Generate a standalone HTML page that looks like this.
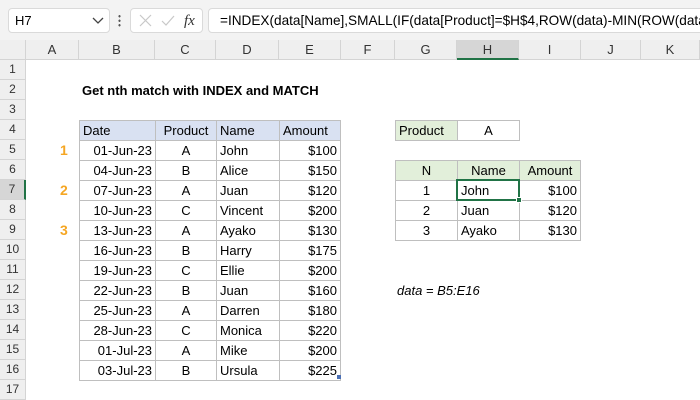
<!DOCTYPE html>
<html><head><style>
*{box-sizing:border-box;margin:0;padding:0}
body{width:700px;height:400px;overflow:hidden;background:#fff;font-family:"Liberation Sans",Calibri,sans-serif;font-size:13px;color:#000;position:relative}
.a{position:absolute}
.top{left:0;top:0;width:700px;height:40px;background:#f3f3f3}
.box{background:#fff;border:1px solid #dadada;border-radius:4px}
.ch{top:40px;height:20px;background:#efefef;border-right:1px solid #d4d4d4;border-bottom:1px solid #d4d4d4;text-align:center;line-height:19px;color:#333;font-size:13px}
.rh{left:0;width:26px;height:20px;background:#efefef;border-bottom:1px solid #d4d4d4;border-right:1px solid #d4d4d4;text-align:center;line-height:19px;color:#333;font-size:12px}
.c{height:21px;border:1px solid #bfbfbf;line-height:19px;padding:0 3px;white-space:nowrap;overflow:hidden}
.r{text-align:right}.m{text-align:center}
.hb{background:#d9e1f2}.hg{background:#e2efda}
.n{color:#f5a623;font-weight:bold;font-size:14px;left:60px}
</style></head><body>
<div class="a top"></div>
<div class="a box" style="left:8px;top:8px;width:102px;height:25px"></div>
<div class="a" style="left:15px;top:13px;font-size:13px">H7</div>
<svg class="a" style="left:92px;top:17px" width="12" height="8"><path d="M1 1l5 5 5-5" stroke="#444" fill="none" stroke-width="1.3"/></svg>
<div class="a" style="left:118px;top:14px;width:3px;height:13px;background:radial-gradient(circle,#555 1px,transparent 1.3px) 0 0/3px 4.5px"></div>
<div class="a box" style="left:130px;top:8px;width:73px;height:25px"></div>
<svg class="a" style="left:138px;top:13px" width="60" height="16"><path d="M2 2l11 11M13 2L2 13" stroke="#c8c8c8" stroke-width="1.2"/><path d="M24 8l4 4 8-9" stroke="#c8c8c8" fill="none" stroke-width="1.2"/><text x="46" y="12" font-family="Liberation Serif" font-style="italic" font-size="15" fill="#333">fx</text></svg>
<div class="a box" style="left:208px;top:8px;width:500px;height:25px;border-radius:4px 0 0 4px"></div>
<div class="a" style="left:220px;top:13px;font-size:13.6px;white-space:nowrap">=INDEX(data[Name],SMALL(IF(data[Product]=$H$4,ROW(data)-MIN(ROW(data</div>

<div class="a ch" style="left:0;width:26px;background:#efefef"></div>
<div class="a ch" style="left:26px;width:53px">A</div>
<div class="a ch" style="left:79px;width:76px">B</div>
<div class="a ch" style="left:155px;width:61px">C</div>
<div class="a ch" style="left:216px;width:63px">D</div>
<div class="a ch" style="left:279px;width:62px">E</div>
<div class="a ch" style="left:341px;width:54px">F</div>
<div class="a ch" style="left:395px;width:62px">G</div>
<div class="a ch" style="left:457px;width:62px;background:#d6d6d6;border-bottom:2px solid #217346">H</div>
<div class="a ch" style="left:519px;width:62px">I</div>
<div class="a ch" style="left:581px;width:60px">J</div>
<div class="a ch" style="left:641px;width:59px">K</div>

<div class="a rh" style="top:60px">1</div><div class="a rh" style="top:80px">2</div><div class="a rh" style="top:100px">3</div><div class="a rh" style="top:120px">4</div><div class="a rh" style="top:140px">5</div><div class="a rh" style="top:160px">6</div><div class="a rh" style="top:180px;background:#d6d6d6;border-right:2px solid #217346">7</div><div class="a rh" style="top:200px">8</div><div class="a rh" style="top:220px">9</div><div class="a rh" style="top:240px">10</div><div class="a rh" style="top:260px">11</div><div class="a rh" style="top:280px">12</div><div class="a rh" style="top:300px">13</div><div class="a rh" style="top:320px">14</div><div class="a rh" style="top:340px">15</div><div class="a rh" style="top:360px">16</div><div class="a rh" style="top:380px">17</div>

<div class="a" style="left:82px;top:83px;font-weight:bold;font-size:13px">Get nth match with INDEX and MATCH</div>
<div class="a n" style="top:142px">1</div><div class="a n" style="top:182px">2</div><div class="a n" style="top:222px">3</div>

<div class="a c hb" style="left:79px;top:120px;width:77px">Date</div>
<div class="a c hb m" style="left:155px;top:120px;width:62px">Product</div>
<div class="a c hb" style="left:216px;top:120px;width:64px">Name</div>
<div class="a c hb" style="left:279px;top:120px;width:62px">Amount</div>

<div class="a c r" style="left:79px;top:140px;width:77px">01-Jun-23</div><div class="a c m" style="left:155px;top:140px;width:62px">A</div><div class="a c" style="left:216px;top:140px;width:64px">John</div><div class="a c r" style="left:279px;top:140px;width:62px">$100</div>
<div class="a c r" style="left:79px;top:160px;width:77px">04-Jun-23</div><div class="a c m" style="left:155px;top:160px;width:62px">B</div><div class="a c" style="left:216px;top:160px;width:64px">Alice</div><div class="a c r" style="left:279px;top:160px;width:62px">$150</div>
<div class="a c r" style="left:79px;top:180px;width:77px">07-Jun-23</div><div class="a c m" style="left:155px;top:180px;width:62px">A</div><div class="a c" style="left:216px;top:180px;width:64px">Juan</div><div class="a c r" style="left:279px;top:180px;width:62px">$120</div>
<div class="a c r" style="left:79px;top:200px;width:77px">10-Jun-23</div><div class="a c m" style="left:155px;top:200px;width:62px">C</div><div class="a c" style="left:216px;top:200px;width:64px">Vincent</div><div class="a c r" style="left:279px;top:200px;width:62px">$200</div>
<div class="a c r" style="left:79px;top:220px;width:77px">13-Jun-23</div><div class="a c m" style="left:155px;top:220px;width:62px">A</div><div class="a c" style="left:216px;top:220px;width:64px">Ayako</div><div class="a c r" style="left:279px;top:220px;width:62px">$130</div>
<div class="a c r" style="left:79px;top:240px;width:77px">16-Jun-23</div><div class="a c m" style="left:155px;top:240px;width:62px">B</div><div class="a c" style="left:216px;top:240px;width:64px">Harry</div><div class="a c r" style="left:279px;top:240px;width:62px">$175</div>
<div class="a c r" style="left:79px;top:260px;width:77px">19-Jun-23</div><div class="a c m" style="left:155px;top:260px;width:62px">C</div><div class="a c" style="left:216px;top:260px;width:64px">Ellie</div><div class="a c r" style="left:279px;top:260px;width:62px">$200</div>
<div class="a c r" style="left:79px;top:280px;width:77px">22-Jun-23</div><div class="a c m" style="left:155px;top:280px;width:62px">B</div><div class="a c" style="left:216px;top:280px;width:64px">Juan</div><div class="a c r" style="left:279px;top:280px;width:62px">$160</div>
<div class="a c r" style="left:79px;top:300px;width:77px">25-Jun-23</div><div class="a c m" style="left:155px;top:300px;width:62px">A</div><div class="a c" style="left:216px;top:300px;width:64px">Darren</div><div class="a c r" style="left:279px;top:300px;width:62px">$180</div>
<div class="a c r" style="left:79px;top:320px;width:77px">28-Jun-23</div><div class="a c m" style="left:155px;top:320px;width:62px">C</div><div class="a c" style="left:216px;top:320px;width:64px">Monica</div><div class="a c r" style="left:279px;top:320px;width:62px">$220</div>
<div class="a c r" style="left:79px;top:340px;width:77px">01-Jul-23</div><div class="a c m" style="left:155px;top:340px;width:62px">A</div><div class="a c" style="left:216px;top:340px;width:64px">Mike</div><div class="a c r" style="left:279px;top:340px;width:62px">$200</div>
<div class="a c r" style="left:79px;top:360px;width:77px">03-Jul-23</div><div class="a c m" style="left:155px;top:360px;width:62px">B</div><div class="a c" style="left:216px;top:360px;width:64px">Ursula</div><div class="a c r" style="left:279px;top:360px;width:62px">$225</div>
<div class="a" style="left:337px;top:375px;width:4px;height:4px;background:#4a6fb5"></div>

<div class="a c hg" style="left:395px;top:120px;width:63px">Product</div>
<div class="a c m" style="left:457px;top:120px;width:63px">A</div>

<div class="a c hg m" style="left:395px;top:160px;width:63px">N</div>
<div class="a c hg m" style="left:457px;top:160px;width:63px">Name</div>
<div class="a c hg m" style="left:519px;top:160px;width:62px">Amount</div>
<div class="a c m" style="left:395px;top:180px;width:63px">1</div><div class="a c" style="left:457px;top:180px;width:63px">John</div><div class="a c r" style="left:519px;top:180px;width:62px">$100</div>
<div class="a c m" style="left:395px;top:200px;width:63px">2</div><div class="a c" style="left:457px;top:200px;width:63px">Juan</div><div class="a c r" style="left:519px;top:200px;width:62px">$120</div>
<div class="a c m" style="left:395px;top:220px;width:63px">3</div><div class="a c" style="left:457px;top:220px;width:63px">Ayako</div><div class="a c r" style="left:519px;top:220px;width:62px">$130</div>
<div class="a" style="left:456px;top:179px;width:64px;height:22px;border:2px solid #217346"></div>
<div class="a" style="left:516px;top:197px;width:6px;height:6px;background:#217346;border:1px solid #fff"></div>

<div class="a" style="left:397px;top:283px;font-style:italic">data = B5:E16</div>
</body></html>
